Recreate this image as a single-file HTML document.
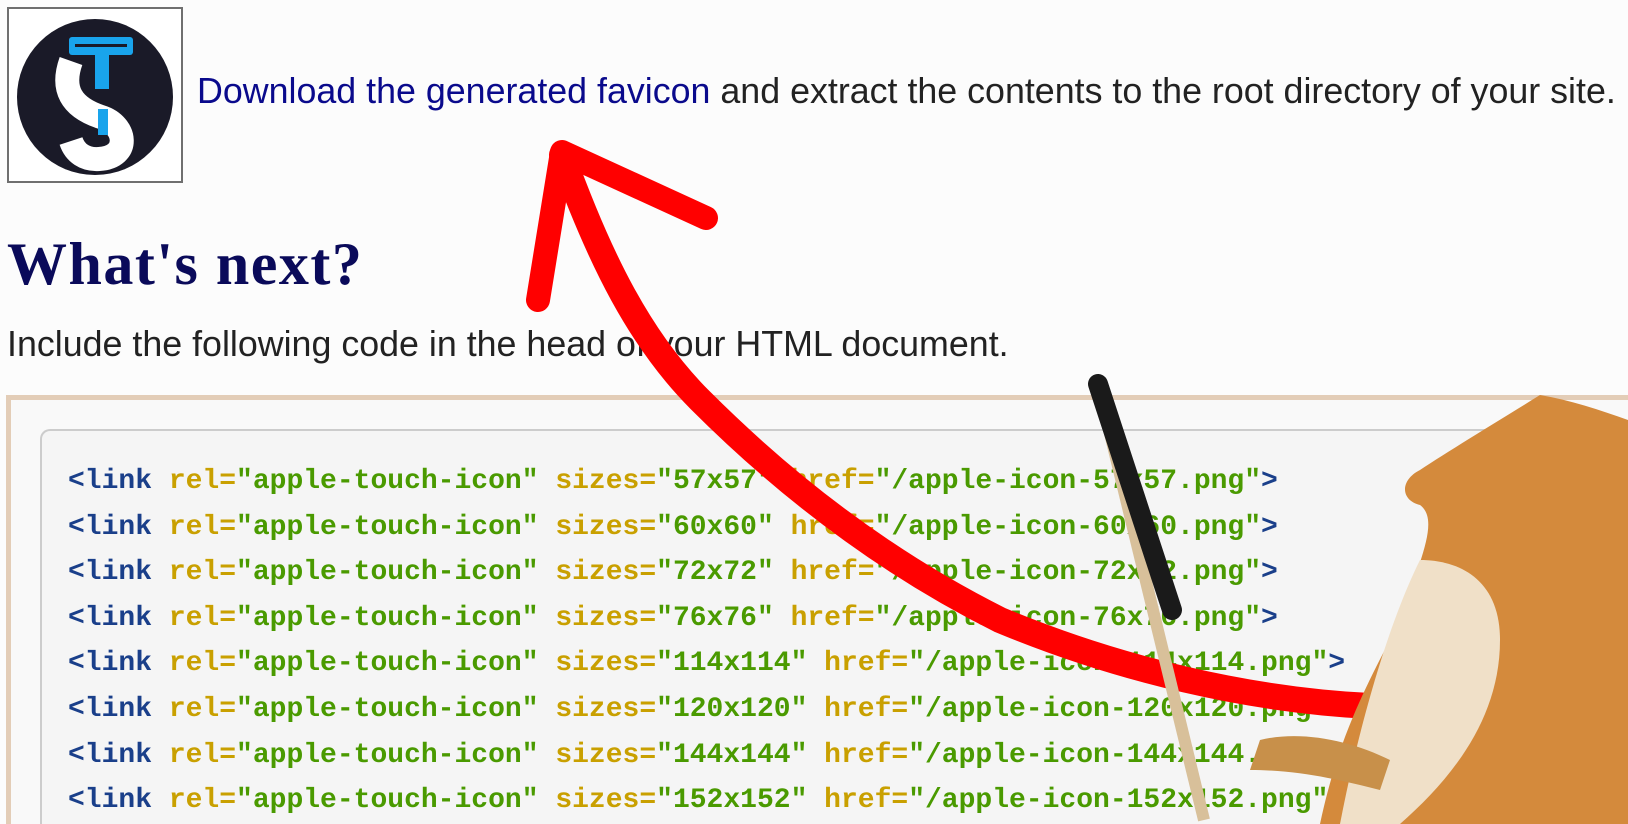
<!DOCTYPE html>
<html><head><meta charset="utf-8"><style>
html{overflow:hidden;height:824px}
body{margin:0;width:1628px;height:824px;background:#fcfcfc;overflow:hidden;position:relative;font-family:"Liberation Sans",Arial,sans-serif}
.logo{position:absolute;left:7px;top:7px;width:172px;height:172px;border:2px solid #6f6f6f;background:#fff}
.t1{position:absolute;left:197px;top:71px;font-size:35.8px;color:#222;white-space:nowrap}
.t1 a{color:#0a0a8c;text-decoration:none}
h1{position:absolute;left:7px;top:230px;margin:0;font-family:"Liberation Serif",serif;font-size:60px;letter-spacing:1.5px;color:#0a0a5a;font-weight:bold}
.t2{position:absolute;left:7px;top:324px;font-size:35.8px;color:#222}
.outer{position:absolute;left:6px;top:395px;width:1622px;height:424px;border:5px solid #e3cdb7;border-right:none;border-bottom:none;background:#f9f9f9}
.inner{position:absolute;left:40px;top:429px;width:1588px;height:395px;border:2px solid #ccc;border-right:none;border-bottom:none;border-radius:10px 0 0 0;background:#f5f5f5}
pre{position:absolute;left:68px;top:459px;width:1560px;height:365px;overflow:hidden;margin:0;font-family:"Liberation Mono",monospace;font-size:28px;line-height:45.6px;font-weight:bold;color:#4a9a00}
.k{color:#1a3f8a}.a{color:#c9a000}
</style></head><body>
<div class="logo"><svg width="172" height="172" viewBox="0 0 172 172">
<circle cx="86" cy="88" r="78" fill="#1a1a28"/>
<path d="M62 52 C52 80 62 98 92 108 C118 116 122 148 90 150 C76 151 66 144 62 132" stroke="#fff" stroke-width="24" fill="none"/>
<rect x="60" y="28" width="64" height="18" rx="3" fill="#19a4ec"/>
<rect x="66" y="35" width="52" height="3" fill="#1a1a28"/>
<rect x="86" y="44" width="14" height="36" fill="#19a4ec"/>
<rect x="89" y="100" width="10" height="26" fill="#19a4ec"/>
</svg></div>
<div class="t1"><a>Download the generated favicon</a> and extract the contents to the root directory of your site.</div>
<h1>What's next?</h1>
<div class="t2">Include the following code in the head of your HTML document.</div>
<div class="outer"></div>
<div class="inner"></div>
<pre><span class="k">&lt;link</span> <span class="a">rel=</span>"apple-touch-icon" <span class="a">sizes=</span>"57x57" <span class="a">href=</span>"/apple-icon-57x57.png"<span class="k">&gt;</span>
<span class="k">&lt;link</span> <span class="a">rel=</span>"apple-touch-icon" <span class="a">sizes=</span>"60x60" <span class="a">href=</span>"/apple-icon-60x60.png"<span class="k">&gt;</span>
<span class="k">&lt;link</span> <span class="a">rel=</span>"apple-touch-icon" <span class="a">sizes=</span>"72x72" <span class="a">href=</span>"/apple-icon-72x72.png"<span class="k">&gt;</span>
<span class="k">&lt;link</span> <span class="a">rel=</span>"apple-touch-icon" <span class="a">sizes=</span>"76x76" <span class="a">href=</span>"/apple-icon-76x76.png"<span class="k">&gt;</span>
<span class="k">&lt;link</span> <span class="a">rel=</span>"apple-touch-icon" <span class="a">sizes=</span>"114x114" <span class="a">href=</span>"/apple-icon-114x114.png"<span class="k">&gt;</span>
<span class="k">&lt;link</span> <span class="a">rel=</span>"apple-touch-icon" <span class="a">sizes=</span>"120x120" <span class="a">href=</span>"/apple-icon-120x120.png"<span class="k">&gt;</span>
<span class="k">&lt;link</span> <span class="a">rel=</span>"apple-touch-icon" <span class="a">sizes=</span>"144x144" <span class="a">href=</span>"/apple-icon-144x144.png"<span class="k">&gt;</span>
<span class="k">&lt;link</span> <span class="a">rel=</span>"apple-touch-icon" <span class="a">sizes=</span>"152x152" <span class="a">href=</span>"/apple-icon-152x152.png"<span class="k">&gt;</span></pre>
<svg style="position:absolute;left:0;top:0" width="1628" height="824">
<path d="M562 155 C600 260 640 340 700 400 C780 480 880 560 1000 620 C1120 670 1250 700 1370 706" stroke="#f00" stroke-width="26" fill="none" stroke-linecap="round"/>
<path d="M562 152 L538 300 M562 152 L706 218" stroke="#f00" stroke-width="24" fill="none" stroke-linecap="round"/>
<path d="M1098 384 L1204 820" stroke="#d8c09a" stroke-width="12"/>
<path d="M1098 384 L1172 610" stroke="#1a1a1a" stroke-width="20" stroke-linecap="round"/>
<path d="M1540 395 C1500 420 1450 450 1420 470 C1400 480 1400 500 1420 505 C1440 520 1420 560 1400 620 C1370 680 1340 730 1320 824 L1628 824 L1628 420 C1600 410 1570 400 1540 395 Z" fill="#d48a3c"/>
<path d="M1420 560 C1460 560 1500 580 1500 640 C1500 720 1450 780 1400 824 L1340 824 C1360 720 1390 620 1420 560 Z" fill="#f0e0c8"/>
<path d="M1260 740 C1300 730 1350 740 1390 760 L1380 790 C1340 780 1300 770 1250 770 Z" fill="#c8904a"/>
</svg>
</body></html>
